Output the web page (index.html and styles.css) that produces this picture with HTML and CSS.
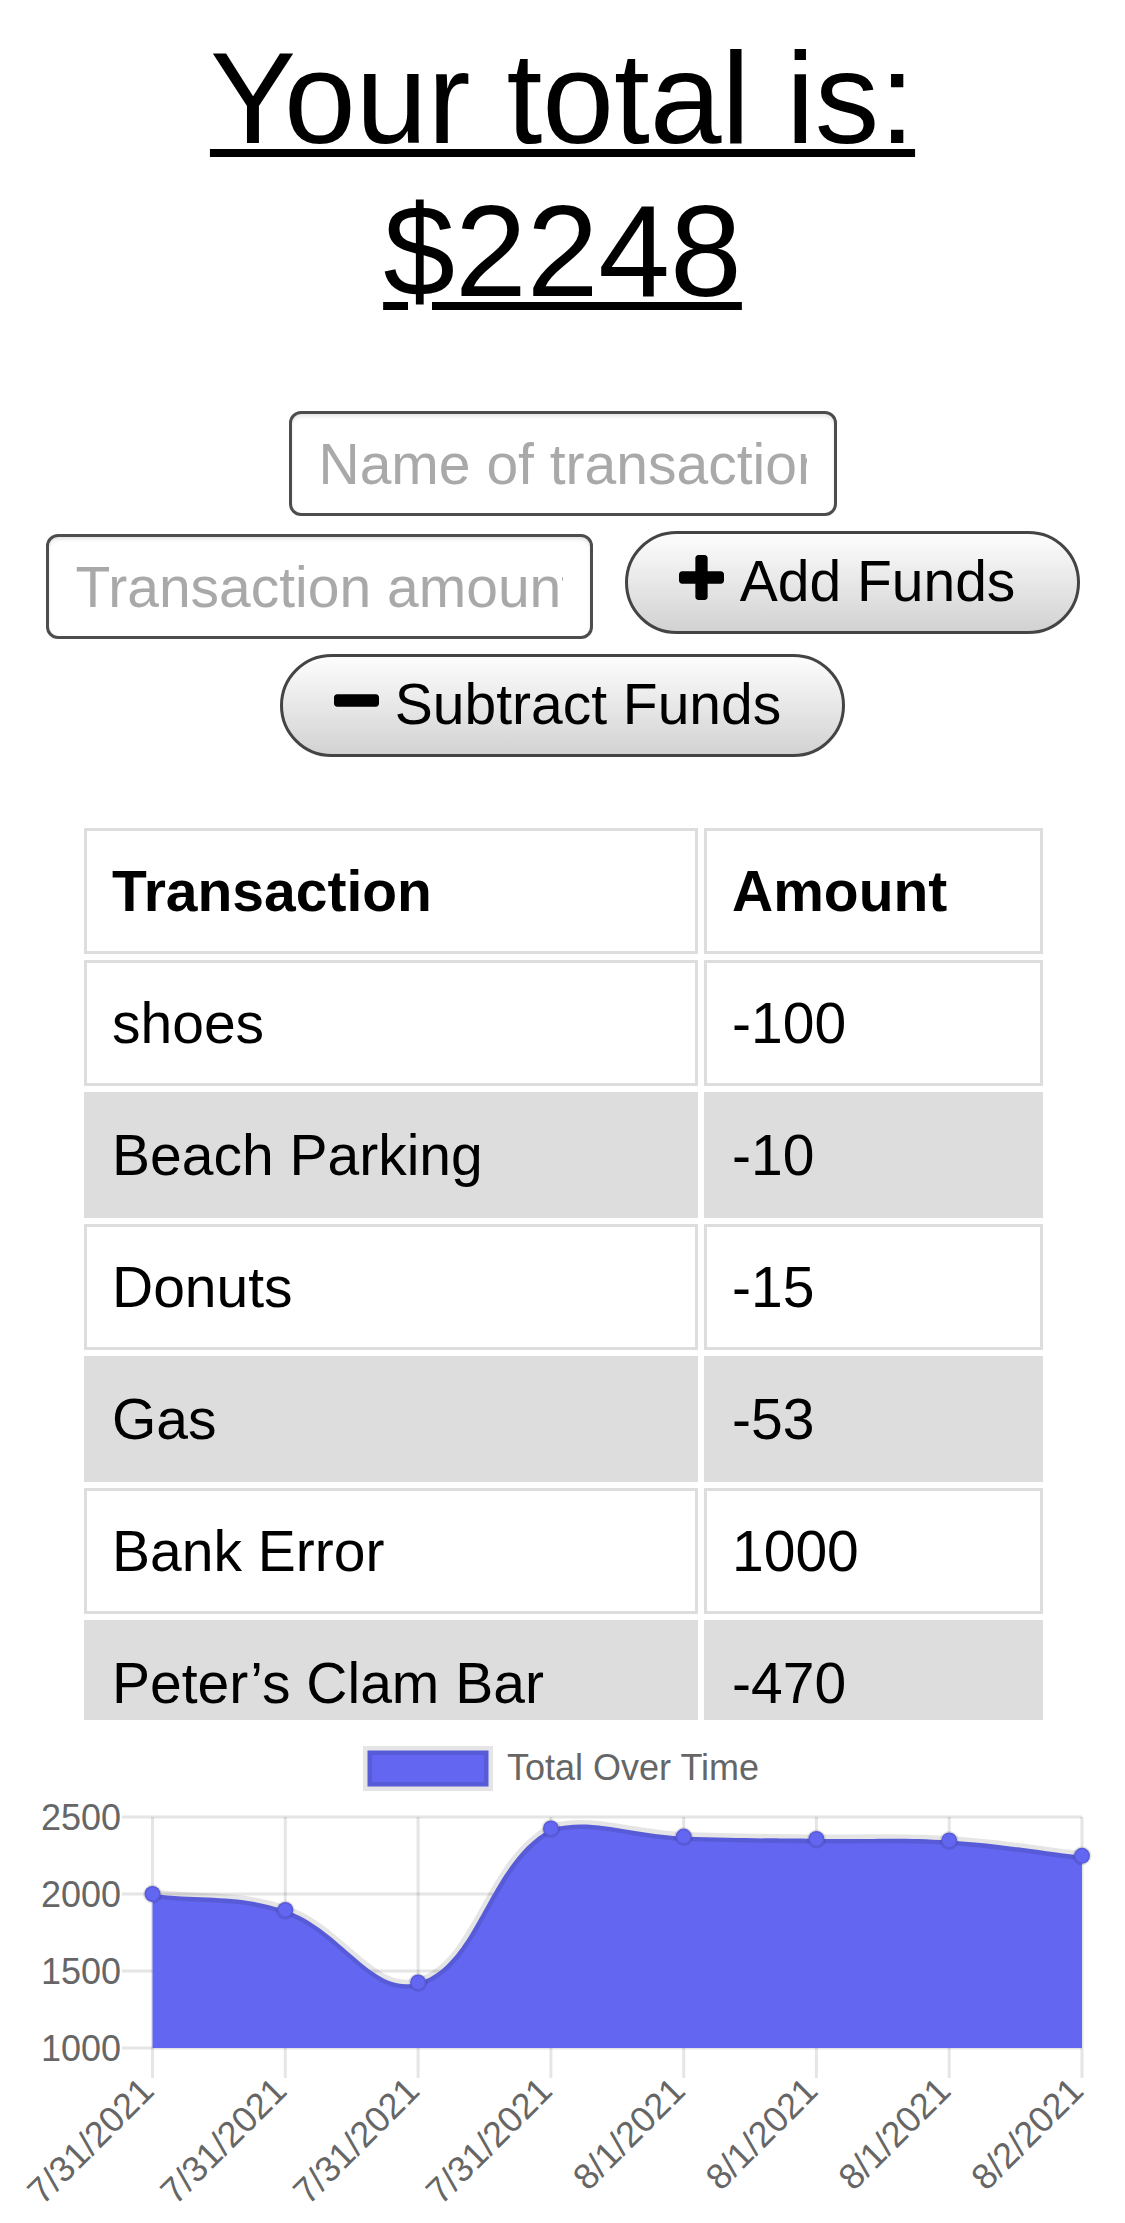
FILE: index.html
```html
<!DOCTYPE html>
<html lang="en">
<head>
<meta charset="utf-8">
<title>Budget Tracker</title>
<link rel="stylesheet" href="styles.css">
</head>
<body>
<h1 class="total"><span class="total-text">Your total is:<br>$2248</span></h1>

<form class="tx-form">
  <input class="field field-name" type="text" placeholder="Name of transaction">
  <div class="form-row">
    <input class="field field-amount" type="text" inputmode="decimal" placeholder="Transaction amount">
    <button type="button" class="btn btn-add">
      <svg class="btn-icon" viewBox="0 192 1408 1408" aria-hidden="true"><path d="M1408 800v192q0 40-28 68t-68 28h-416v416q0 40-28 68t-68 28h-192q-40 0-68-28t-28-68v-416h-416q-40 0-68-28t-28-68v-192q0-40 28-68t68-28h416v-416q0-40 28-68t68-28h192q40 0 68 28t28 68v416h416q40 0 68 28t28 68z"/></svg>
      <span>Add Funds</span>
    </button>
  </div>
  <button type="button" class="btn btn-sub">
    <svg class="btn-icon" viewBox="0 192 1408 1408" aria-hidden="true"><path d="M1408 800v192q0 40-28 68t-68 28h-1216q-40 0-68-28t-28-68v-192q0-40 28-68t68-28h1216q40 0 68 28t28 68z"/></svg>
    <span>Subtract Funds</span>
  </button>
</form>

<div class="table-wrap">
  <table class="tx-table">
    <thead>
      <tr><th class="col-name">Transaction</th><th class="col-amount">Amount</th></tr>
    </thead>
    <tbody>
      <tr><td>shoes</td><td>-100</td></tr>
      <tr><td>Beach Parking</td><td>-10</td></tr>
      <tr><td>Donuts</td><td>-15</td></tr>
      <tr><td>Gas</td><td>-53</td></tr>
      <tr><td>Bank Error</td><td>1000</td></tr>
      <tr><td>Peter’s Clam Bar</td><td>-470</td></tr>
    </tbody>
  </table>
</div>

<div class="chart">
  <svg class="chart-svg" viewBox="0 0 1125 503" width="1125" height="503">
    <rect class="legend-box" x="367.5" y="30.5" width="121" height="36"/>
    <text class="chart-text" x="507" y="60">Total Over Time</text>

    <g class="grid">
      <line x1="122" y1="97" x2="1082" y2="97"/>
      <line x1="122" y1="174" x2="1082" y2="174"/>
      <line x1="122" y1="251" x2="1082" y2="251"/>
      <line x1="122" y1="328" x2="1082" y2="328"/>
      <line x1="152.5" y1="97" x2="152.5" y2="358"/>
      <line x1="285.3" y1="97" x2="285.3" y2="358"/>
      <line x1="418.1" y1="97" x2="418.1" y2="358"/>
      <line x1="550.9" y1="97" x2="550.9" y2="358"/>
      <line x1="683.7" y1="97" x2="683.7" y2="358"/>
      <line x1="816.4" y1="97" x2="816.4" y2="358"/>
      <line x1="949.2" y1="97" x2="949.2" y2="358"/>
      <line x1="1082" y1="97" x2="1082" y2="358"/>
    </g>

    <text class="chart-text y-tick" x="121" y="97">2500</text>
    <text class="chart-text y-tick" x="121" y="174">2000</text>
    <text class="chart-text y-tick" x="121" y="251">1500</text>
    <text class="chart-text y-tick" x="121" y="328">1000</text>

    <path class="area" d="M152.5,174 C205.6,180.4 235.45,173.41 285.3,190 C341.69,208.77 372.79,276.32 418.1,262.4 C479.03,243.68 486.68,143.65 550.9,108.4 C592.92,97 630.55,114.5 683.7,116.6 C736.75,118.7 763.3,118.14 816.4,118.9 C869.5,119.66 896.24,117.03 949.2,120.4 C1002.48,123.79 1028.88,129.64 1082,135.8 L1082,328 L152.5,328 Z"/>
    <path class="line" d="M152.5,174 C205.6,180.4 235.45,173.41 285.3,190 C341.69,208.77 372.79,276.32 418.1,262.4 C479.03,243.68 486.68,143.65 550.9,108.4 C592.92,97 630.55,114.5 683.7,116.6 C736.75,118.7 763.3,118.14 816.4,118.9 C869.5,119.66 896.24,117.03 949.2,120.4 C1002.48,123.79 1028.88,129.64 1082,135.8"/>

    <g class="points">
      <circle cx="152.5" cy="174" r="8"/>
      <circle cx="285.3" cy="190" r="8"/>
      <circle cx="418.1" cy="262.4" r="8"/>
      <circle cx="550.9" cy="108.4" r="8"/>
      <circle cx="683.7" cy="116.6" r="8"/>
      <circle cx="816.4" cy="118.9" r="8"/>
      <circle cx="949.2" cy="120.4" r="8"/>
      <circle cx="1082" cy="135.8" r="8"/>
    </g>

    <text class="chart-text x-tick" transform="translate(147 364) rotate(-45)">7/31/2021</text>
    <text class="chart-text x-tick" transform="translate(279.8 364) rotate(-45)">7/31/2021</text>
    <text class="chart-text x-tick" transform="translate(412.6 364) rotate(-45)">7/31/2021</text>
    <text class="chart-text x-tick" transform="translate(545.4 364) rotate(-45)">7/31/2021</text>
    <text class="chart-text x-tick" transform="translate(678.2 364) rotate(-45)">8/1/2021</text>
    <text class="chart-text x-tick" transform="translate(810.9 364) rotate(-45)">8/1/2021</text>
    <text class="chart-text x-tick" transform="translate(943.7 364) rotate(-45)">8/1/2021</text>
    <text class="chart-text x-tick" transform="translate(1076.5 364) rotate(-45)">8/2/2021</text>
  </svg>
</div>
</body>
</html>
```

FILE: styles.css
```css
* {
  box-sizing: border-box;
}

html,
body {
  margin: 0;
  padding: 0;
  background: #fff;
}

body {
  width: 1125px;
  font-family: "Liberation Sans", Arial, Helvetica, sans-serif;
  color: #000;
}

/* Heading */
.total {
  margin: 0;
  padding-top: 22px;
  font-size: 129px;
  line-height: 153px;
  font-weight: 400;
  text-align: center;
}

.total-text {
  text-decoration: underline;
  text-decoration-thickness: 8px;
  text-underline-offset: 6px;
}

/* Form */
.tx-form {
  margin: 83px 0 0;
  display: flex;
  flex-direction: column;
  align-items: center;
  gap: 15px;
}

.field {
  height: 105px;
  padding: 0 27px;
  border: 3px solid #4d4d4d;
  border-radius: 12px;
  background: #fff;
  color: #000;
  font-family: "Liberation Sans", Arial, Helvetica, sans-serif;
  font-size: 57px;
  line-height: 64px;
  box-shadow: inset 0 3px 4px -1px rgba(0, 0, 0, 0.12);
  outline: none;
}

.field::placeholder {
  color: #a9a9a9;
  opacity: 1;
}

.field-name {
  width: 548px;
}

.form-row {
  display: flex;
  align-items: flex-start;
  gap: 32px;
}

.field-amount {
  width: 547px;
  margin-top: 3px;
}

.btn {
  display: flex;
  align-items: center;
  justify-content: center;
  gap: 16px;
  height: 103px;
  padding: 0 10px 4px 0;
  border: 3px solid #444;
  border-radius: 52px;
  background: linear-gradient(#fdfdfd, #d2d2d2);
  color: #000;
  font-family: "Liberation Sans", Arial, Helvetica, sans-serif;
  font-size: 57px;
  line-height: 64px;
  cursor: pointer;
}

.btn-add {
  width: 455px;
}

.btn-sub {
  width: 565px;
}

.btn-icon {
  width: 45px;
  height: 45px;
  margin-bottom: 6px;
  fill: currentColor;
  flex: none;
}

/* Table */
.table-wrap {
  margin-top: 65px;
  height: 898px;
  overflow: hidden;
  padding-left: 2px;
}

.tx-table {
  width: 971px;
  margin: 0 auto;
  border-collapse: separate;
  border-spacing: 6px;
  font-size: 57px;
  line-height: 64px;
}

.tx-table th,
.tx-table td {
  border: 3px solid #ddd;
  padding: 28px 25px;
  text-align: left;
  vertical-align: middle;
}

.tx-table th {
  font-weight: 700;
}

.col-name {
  width: 614px;
}

.col-amount {
  width: 339px;
}

.tx-table tbody tr:nth-child(even) td {
  background: #ddd;
}

/* Chart */
.chart {
  height: 503px;
}

.chart-svg {
  display: block;
}

.chart-text {
  font-family: "Liberation Sans", Arial, Helvetica, sans-serif;
  font-size: 36px;
  fill: #666;
}

.y-tick {
  text-anchor: end;
  dominant-baseline: central;
}

.x-tick {
  text-anchor: end;
  dominant-baseline: central;
}

.legend-box {
  fill: #6366f1;
  stroke: rgba(0, 0, 0, 0.1);
  stroke-width: 9;
}

.grid line {
  stroke: rgba(0, 0, 0, 0.1);
  stroke-width: 3;
}

.area {
  fill: #6366f1;
}

.line {
  fill: none;
  stroke: rgba(0, 0, 0, 0.1);
  stroke-width: 9;
}

.points circle {
  fill: #6366f1;
  stroke: rgba(0, 0, 0, 0.1);
  stroke-width: 3;
}
```
